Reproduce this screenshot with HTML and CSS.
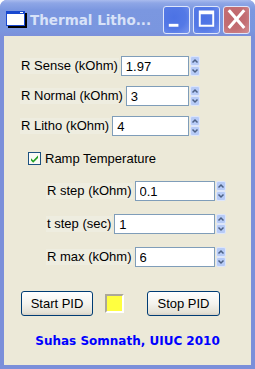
FILE: index.html
```html
<!DOCTYPE html>
<html lang="en">

<head>
    <meta charset="UTF-8">
    <title>Thermal Lithography</title>
    <link rel="stylesheet" href="styles.css">
</head>

<body>
    <div class="window">
        <div class="titlebar">
            <svg class="app-icon" width="21" height="17" viewBox="0 0 21 17">
                <rect x="2" y="2" width="19" height="15" fill="#000"/>
                <rect x="0" y="0" width="19" height="15" fill="#1848d0"/>
                <rect x="1" y="3" width="17" height="11" fill="#fff"/>
                <rect x="14" y="1" width="3" height="1" fill="#fff"/>
            </svg>
            <span class="title">Thermal Litho...</span>
            <div class="caption-btns">
                <div class="cap-btn">
                    <svg width="26" height="28" viewBox="0 0 26 28"><rect x="5" y="18" width="10" height="3" fill="#fff"/></svg>
                </div>
                <div class="cap-btn">
                    <svg width="26" height="28" viewBox="0 0 26 28"><path d="M5 4h16v17H5z M7 8v11h12V8z" fill="#fff" fill-rule="evenodd"/></svg>
                </div>
                <div class="cap-btn close">
                    <svg width="26" height="28" viewBox="0 0 26 28"><path d="M6 5L20 21M20 5L6 21" stroke="#fff" stroke-width="3.2" stroke-linecap="square"/></svg>
                </div>
            </div>
        </div>

        <div class="content">
            <div class="group">
                <div class="row">
                    <span class="label">R Sense (kOhm)</span>
                    <input class="edit" type="text" value="1.97">
                    <svg class="spin" width="10" height="20" viewBox="0 0 10 20"><use href="#spin"/></svg>
                </div>
                <div class="row">
                    <span class="label">R Normal (kOhm)</span>
                    <input class="edit" type="text" value="3">
                    <svg class="spin" width="10" height="20" viewBox="0 0 10 20"><use href="#spin"/></svg>
                </div>
                <div class="row">
                    <span class="label">R Litho (kOhm)</span>
                    <input class="edit" type="text" value="4">
                    <svg class="spin" width="10" height="20" viewBox="0 0 10 20"><use href="#spin"/></svg>
                </div>
            </div>

            <div class="check-row">
                <svg class="check" width="13" height="13" viewBox="0 0 13 13">
                    <rect x="0.5" y="0.5" width="12" height="12" fill="#fafaf6" stroke="#1c5180"/>
                    <path d="M3 6.2l2.2 2.3L10 3.6v2.3L5.2 10.8 3 8.5z" fill="#21a121"/>
                </svg>
                <span class="label">Ramp Temperature</span>
            </div>

            <div class="group sub">
                <div class="row">
                    <span class="label">R step (kOhm)</span>
                    <input class="edit" type="text" value="0.1">
                    <svg class="spin" width="10" height="20" viewBox="0 0 10 20"><use href="#spin"/></svg>
                </div>
                <div class="row">
                    <span class="label">t step (sec)</span>
                    <input class="edit" type="text" value="1">
                    <svg class="spin" width="10" height="20" viewBox="0 0 10 20"><use href="#spin"/></svg>
                </div>
                <div class="row">
                    <span class="label">R max (kOhm)</span>
                    <input class="edit" type="text" value="6">
                    <svg class="spin" width="10" height="20" viewBox="0 0 10 20"><use href="#spin"/></svg>
                </div>
            </div>

            <div class="btn-row">
                <button class="btn">Start PID</button>
                <div class="lamp"></div>
                <button class="btn stop">Stop PID</button>
            </div>

            <div class="credit">Suhas Somnath, UIUC 2010</div>
        </div>
    </div>

    <!-- shared spinner drawing -->
    <svg width="0" height="0" class="defs">
        <defs>
            <g id="spin">
                <rect x="0.5" y="0.5" width="9" height="9" rx="1.5" fill="#b7cbf6" stroke="#dde6fb"/>
                <rect x="0.5" y="10.5" width="9" height="9" rx="1.5" fill="#b7cbf6" stroke="#dde6fb"/>
                <path d="M2.5 6.5L5 4l2.5 2.5" fill="none" stroke="#4d6185" stroke-width="1.5"/>
                <path d="M2.5 13.5L5 16l2.5-2.5" fill="none" stroke="#4d6185" stroke-width="1.5"/>
            </g>
        </defs>
    </svg>
</body>

</html>
```

FILE: styles.css
```css
* {
    margin: 0;
    padding: 0;
    box-sizing: border-box;
}

body {
    width: 255px;
    height: 369px;
    background: #fff;
    font-family: "Liberation Sans", Arial, sans-serif;
    font-size: 13px;
    overflow: hidden;
}

.window {
    width: 255px;
    height: 369px;
    background: #7b8fda;
    border-radius: 7px 7px 0 0;
    display: flex;
    flex-direction: column;
}

.titlebar {
    height: 36px;
    display: flex;
    align-items: center;
    padding: 4px 5px 0 6px;
    border-radius: 7px 7px 0 0;
    background: linear-gradient(#a9bbee 0, #8ea6e6 3px, #7b97e0 10px, #7a96df 30px, #7b90da 36px);
}

.app-icon {
    flex: none;
    margin-top: -1px;
}

.title {
    margin-left: 3px;
    font-family: "DejaVu Sans", sans-serif;
    font-weight: bold;
    font-size: 13.5px;
    color: #d8e2f8;
}

.caption-btns {
    margin-left: auto;
    display: flex;
    gap: 3px;
}

.cap-btn {
    width: 27px;
    height: 28px;
    border: 1px solid #dfe6fa;
    border-radius: 3px;
    background: radial-gradient(circle at 40% 40%, #4c72e4 0, #5479e6 55%, #7794ee 100%);
    display: flex;
    align-items: center;
    justify-content: center;
}

.cap-btn svg {
    display: block;
}

.cap-btn.close {
    background: radial-gradient(circle at 40% 40%, #c0666b 0, #c36e73 55%, #d39094 100%);
}

.content {
    margin: 0 4px 4px;
    flex: 1;
    background: #ece9d8;
    padding: 20px 0 0 16px;
}

.group {
    display: flex;
    flex-direction: column;
    gap: 10px;
}

.group.sub {
    margin: 16px 0 0 26px;
    gap: 13px;
}

.row {
    width: 180px;
    height: 20px;
    display: flex;
    align-items: center;
}

.label {
    background: #eeede0;
    padding: 0 1px;
    line-height: 16px;
    color: #000;
    white-space: nowrap;
}

.edit {
    flex: 1;
    min-width: 0;
    height: 20px;
    margin-left: 2px;
    border: 1px solid #7f9db9;
    background: #fff;
    font-family: "Liberation Sans", Arial, sans-serif;
    font-size: 13px;
    color: #000;
    padding: 0 4px;
    outline: none;
}

.spin {
    flex: none;
    margin-left: 1px;
    display: block;
}

.check-row {
    margin: 16px 0 0 8px;
    height: 13px;
    display: flex;
    align-items: center;
    gap: 3px;
}

.check {
    flex: none;
    display: block;
}

.check-row .label {
    background: none;
}

.btn-row {
    margin: 24px 0 0 1px;
    display: flex;
    align-items: center;
}

.btn {
    width: 72px;
    height: 25px;
    border: 1px solid #003c74;
    border-radius: 3px;
    background: linear-gradient(#fff 0, #f4f3ee 50%, #e4e1d5 90%, #d6d0c5 100%);
    font-family: "Liberation Sans", Arial, sans-serif;
    font-size: 13px;
    color: #000;
}

.btn.stop {
    width: 73px;
    margin-left: 23px;
}

.lamp {
    width: 19px;
    height: 19px;
    margin-left: 12px;
    background: #ffff40;
    border: 2px solid;
    border-color: #aca899 #fff #fff #aca899;
}

.credit {
    margin: 17px 0 0 -16px;
    text-align: center;
    font-family: "DejaVu Sans", Verdana, sans-serif;
    font-weight: bold;
    font-size: 12px;
    line-height: 16px;
    color: #0000ff;
}

.defs {
    position: absolute;
}
```
